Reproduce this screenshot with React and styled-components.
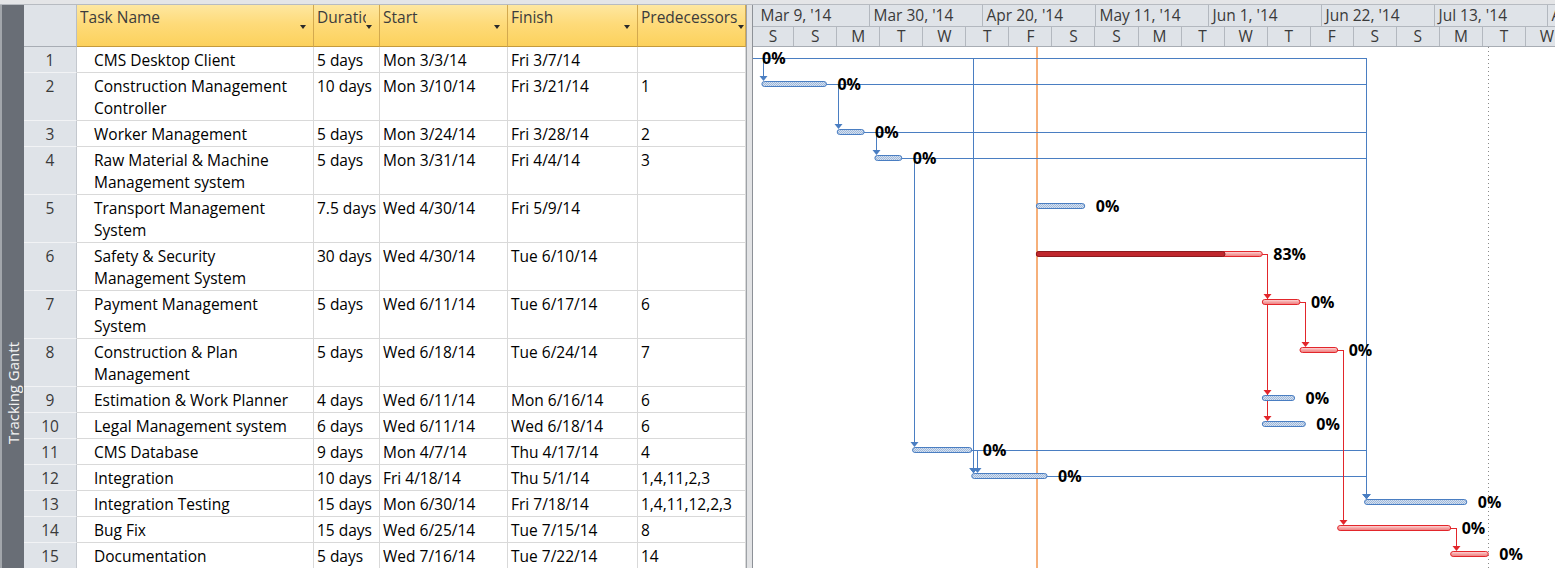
import React from 'react';
import styled, { createGlobalStyle } from 'styled-components';

const FONT = `"Open Sans", "Noto Sans", "DejaVu Sans", sans-serif`;

const GlobalStyle = createGlobalStyle`
  *, *::before, *::after { box-sizing: border-box; }
  html, body { margin: 0; padding: 0; background: #fff; overflow: hidden; }
  body { font-family: ${FONT}; }
`;

/* ---------- data ---------- */
const tasks = [
  { id: 1, name: ['CMS Desktop Client'], dur: '5 days', start: 'Mon 3/3/14', finish: 'Fri 3/7/14', pred: '', s: -6, e: -1 },
  { id: 2, name: ['Construction Management', 'Controller'], dur: '10 days', start: 'Mon 3/10/14', finish: 'Fri 3/21/14', pred: '1', s: 1, e: 13 },
  { id: 3, name: ['Worker Management'], dur: '5 days', start: 'Mon 3/24/14', finish: 'Fri 3/28/14', pred: '2', s: 15, e: 20 },
  { id: 4, name: ['Raw Material & Machine', 'Management system'], dur: '5 days', start: 'Mon 3/31/14', finish: 'Fri 4/4/14', pred: '3', s: 22, e: 27 },
  { id: 5, name: ['Transport Management', 'System'], dur: '7.5 days', start: 'Wed 4/30/14', finish: 'Fri 5/9/14', pred: '', s: 52, e: 61 },
  { id: 6, name: ['Safety & Security', 'Management System'], dur: '30 days', start: 'Wed 4/30/14', finish: 'Tue 6/10/14', pred: '', s: 52, e: 94, crit: true, prog: 0.835, label: '83%' },
  { id: 7, name: ['Payment Management', 'System'], dur: '5 days', start: 'Wed 6/11/14', finish: 'Tue 6/17/14', pred: '6', s: 94, e: 101, crit: true },
  { id: 8, name: ['Construction & Plan', 'Management'], dur: '5 days', start: 'Wed 6/18/14', finish: 'Tue 6/24/14', pred: '7', s: 101, e: 108, crit: true },
  { id: 9, name: ['Estimation & Work Planner'], dur: '4 days', start: 'Wed 6/11/14', finish: 'Mon 6/16/14', pred: '6', s: 94, e: 100 },
  { id: 10, name: ['Legal Management system'], dur: '6 days', start: 'Wed 6/11/14', finish: 'Wed 6/18/14', pred: '6', s: 94, e: 102 },
  { id: 11, name: ['CMS Database'], dur: '9 days', start: 'Mon 4/7/14', finish: 'Thu 4/17/14', pred: '4', s: 29, e: 40 },
  { id: 12, name: ['Integration'], dur: '10 days', start: 'Fri 4/18/14', finish: 'Thu 5/1/14', pred: '1,4,11,2,3', s: 40, e: 54 },
  { id: 13, name: ['Integration Testing'], dur: '15 days', start: 'Mon 6/30/14', finish: 'Fri 7/18/14', pred: '1,4,11,12,2,3', s: 113, e: 132 },
  { id: 14, name: ['Bug Fix'], dur: '15 days', start: 'Wed 6/25/14', finish: 'Tue 7/15/14', pred: '8', s: 108, e: 129, crit: true },
  { id: 15, name: ['Documentation'], dur: '5 days', start: 'Wed 7/16/14', finish: 'Tue 7/22/14', pred: '14', s: 129, e: 136, crit: true },
];

const links = [
  [1, 2], [2, 3], [3, 4], [4, 11],
  [1, 12], [2, 12], [3, 12], [4, 12], [11, 12],
  [1, 13], [2, 13], [3, 13], [4, 13], [11, 13], [12, 13],
  [6, 7], [6, 9], [6, 10], [7, 8], [8, 14], [14, 15],
];

const columns = [
  { key: 'name', label: 'Task Name' },
  { key: 'dur', label: 'Duration', clip: true },
  { key: 'start', label: 'Start' },
  { key: 'finish', label: 'Finish' },
  { key: 'pred', label: 'Predecessors' },
];

const topTier = ["Mar 9, '14", "Mar 30, '14", "Apr 20, '14", "May 11, '14", "Jun 1, '14", "Jun 22, '14", "Jul 13, '14", "A"];
const bottomTier = ['S', 'S', 'M', 'T', 'W', 'T', 'F', 'S', 'S', 'M', 'T', 'W', 'T', 'F', 'S', 'S', 'M', 'T', 'W'];

const DAY = 113 / 21;
const ORIGIN = 3.5;
const X = (d) => ORIGIN + d * DAY;

const rowHeights = tasks.map((t) => (t.name.length > 1 ? 48 : 26));
const rowTops = rowHeights.reduce((acc, h, i) => {
  acc.push(i === 0 ? 0 : acc[i - 1] + rowHeights[i - 1]);
  return acc;
}, []);
const byId = (id) => tasks[id - 1];
const barTop = (id) => rowTops[id - 1] + 8;
const barMid = (id) => Math.round(rowTops[id - 1] + 11) + 0.5;

/* ---------- layout ---------- */
const Screen = styled.div`
  width: 1555px;
  height: 568px;
  overflow: hidden;
  display: flex;
  flex-direction: column;
  background: #fff;
  font-family: ${FONT};
`;

const TopStrip = styled.div`
  flex: none;
  height: 5px;
  background: #e4e5e7;
  border-bottom: 1px solid #b7bbc1;
`;

const Main = styled.div`
  flex: 1;
  min-height: 0;
  display: flex;
`;

const ViewBar = styled.div`
  flex: none;
  width: 24px;
  background: #696e76;
  border-left: 2px solid #a2a6ab;
  display: flex;
  flex-direction: column;
  justify-content: flex-end;
  align-items: center;
  padding-bottom: 124px;
`;

const ViewLabel = styled.span`
  writing-mode: vertical-rl;
  transform: rotate(180deg);
  color: #f4f4f4;
  font-size: 15px;
  white-space: nowrap;
`;

const COLS = '53px 237px 66px 128px 130px 108px';

const Table = styled.div`
  flex: none;
  width: 722px;
  display: flex;
  flex-direction: column;
`;

const HeaderRow = styled.div`
  flex: none;
  display: grid;
  grid-template-columns: ${COLS};
  height: 42px;
`;

const HeaderCorner = styled.div`
  background: #dfe3e8;
  border-right: 1px solid #b9bec5;
  border-bottom: 1px solid #a8adb4;
`;

const HeaderCell = styled.div`
  display: flex;
  align-items: flex-start;
  padding: 1px 0 0 3px;
  background: linear-gradient(#fee7a0 0%, #fedb7a 45%, #fcd15c 100%);
  border-right: 1px solid #d3a94e;
  border-bottom: 1px solid #c49a3c;
  font-size: 15.5px;
  line-height: 22px;
  color: #3c3c3c;
  overflow: hidden;
`;

const HeaderLabel = styled.span`
  flex: ${(p) => (p.$clip ? '1' : 'none')};
  min-width: 0;
  overflow: hidden;
  white-space: nowrap;
`;

const Caret = styled.span`
  flex: none;
  width: 0;
  height: 0;
  margin: 19px 7px 0 auto;
  border-left: 3.5px solid transparent;
  border-right: 3.5px solid transparent;
  border-top: 4px solid #2a2a2a;
`;

const Row = styled.div`
  flex: none;
  display: grid;
  grid-template-columns: ${COLS};
  height: ${(p) => p.$h}px;
`;

const NumCell = styled.div`
  background: #dfe3e8;
  border-right: 1px solid #c4c8ce;
  border-bottom: 1px solid #f2f3f5;
  padding-top: 2px;
  text-align: center;
  font-size: 15.5px;
  line-height: 22px;
  color: #3a3a3a;
`;

const Cell = styled.div`
  border-right: 1px solid #d9d9d9;
  border-bottom: 1px solid #d9d9d9;
  padding: 2px 0 0 ${(p) => (p.$indent ? 17 : 3)}px;
  font-size: 15.5px;
  line-height: 22px;
  color: #000;
  white-space: nowrap;
  overflow: hidden;
`;

const Line = styled.div`
  white-space: nowrap;
`;

const Splitter = styled.div`
  flex: none;
  width: 7px;
  background: #e2e3e5;
  border-left: 1px solid #9ea2a7;
  border-right: 1px solid #8d9197;
`;

const Gantt = styled.div`
  flex: none;
  width: 802px;
  display: flex;
  flex-direction: column;
  overflow: hidden;
`;

const GanttHeader = styled.div`
  flex: none;
  height: 42px;
  background: #dfe3e8;
  border-bottom: 1px solid #a8adb4;
  display: flex;
  flex-direction: column;
`;

const Tier = styled.div`
  flex: none;
  display: flex;
  height: ${(p) => p.$h}px;
  padding-left: ${(p) => p.$pad}px;
  border-bottom: ${(p) => (p.$line ? '1px solid #b3b8bf' : 'none')};
  overflow: hidden;
`;

const TierCell = styled.div`
  flex: none;
  width: ${(p) => p.$w}px;
  border-right: 1px solid #b3b8bf;
  padding-left: ${(p) => (p.$center ? 0 : 4)}px;
  text-align: ${(p) => (p.$center ? 'center' : 'left')};
  font-size: 15.5px;
  line-height: ${(p) => p.$lh}px;
  color: #3a3a3a;
  white-space: nowrap;
  overflow: hidden;
`;

const Chart = styled.svg`
  display: block;
  flex: none;
`;

/* ---------- chart ---------- */
const BLUE = '#4a7ec2';
const RED = '#e2262b';
const STATUS = '#f6b07a';

function GanttChart() {
  const W = 802;
  const H = 521;
  const linkEls = links.map(([a, b], i) => {
    const p = byId(a);
    const s = byId(b);
    const vx = Math.round(Math.max(X(s.s) + 1, X(p.e) + 5)) + 0.5;
    const y1 = barMid(a);
    const tip = barTop(b);
    const color = p.crit ? RED : BLUE;
    return (
      <g key={i}>
        <path
          d={`M ${Math.round(X(p.e))} ${y1} H ${vx} V ${tip - 4}`}
          fill="none"
          stroke={color}
          strokeWidth="1"
          shapeRendering="crispEdges"
        />
        <polygon points={`${vx - 4},${tip - 5} ${vx + 4},${tip - 5} ${vx},${tip}`} fill={color} />
      </g>
    );
  });

  const bars = tasks.map((t) => {
    const x1 = X(t.s);
    const x2 = X(t.e);
    const y = barTop(t.id) + 0.5;
    const w = x2 - x1;
    return (
      <g key={t.id}>
        {t.crit ? (
          <>
            <rect x={x1} y={y} width={w} height={5} rx={2.5} fill="url(#redFill)" stroke={RED} strokeWidth="1" />
            {t.prog ? (
              <rect x={x1} y={y} width={w * t.prog} height={5} rx={2.5} fill="#c0272d" stroke="#8c1b1f" strokeWidth="1" />
            ) : null}
          </>
        ) : (
          <rect x={x1} y={y} width={w} height={5} rx={2.5} fill="url(#hatch)" stroke={BLUE} strokeWidth="1" />
        )}
        <text
          x={x2 + 11}
          y={barTop(t.id) + 9}
          fontFamily={FONT}
          fontWeight="700"
          fontSize="16"
          fill="#000"
        >
          {t.label || '0%'}
        </text>
      </g>
    );
  });

  return (
    <Chart width={W} height={H} viewBox={`0 0 ${W} ${H}`}>
      <defs>
        <pattern id="hatch" width="2" height="2" patternUnits="userSpaceOnUse">
          <rect width="2" height="2" fill="#d6e2f1" />
          <rect width="1" height="1" fill="#9fb8da" />
          <rect x="1" y="1" width="1" height="1" fill="#9fb8da" />
        </pattern>
        <linearGradient id="redFill" x1="0" y1="0" x2="0" y2="1">
          <stop offset="0" stopColor="#fde0e0" />
          <stop offset="0.5" stopColor="#f6a3a3" />
          <stop offset="1" stopColor="#ee7b7b" />
        </linearGradient>
      </defs>
      <rect x="283" y="0" width="2" height={H} fill={STATUS} />
      <line x1="735.5" y1="0" x2="735.5" y2={H} stroke="#8a8a8a" strokeWidth="1" strokeDasharray="1 3" shapeRendering="crispEdges" />
      {linkEls}
      {bars}
    </Chart>
  );
}

/* ---------- app ---------- */
export default function App() {
  const topCells = topTier.map((label, i) => (
    <TierCell key={i} $w={113} $lh={21}>
      {label}
    </TierCell>
  ));
  const firstBottom = X(7);
  const bottomCells = bottomTier.map((label, i) => (
    <TierCell key={i} $w={i === 0 ? firstBottom : 8 * DAY} $center $lh={19}>
      {label}
    </TierCell>
  ));

  return (
    <>
      <GlobalStyle />
      <Screen>
        <TopStrip />
        <Main>
          <ViewBar>
            <ViewLabel>Tracking Gantt</ViewLabel>
          </ViewBar>
          <Table>
            <HeaderRow>
              <HeaderCorner />
              {columns.map((c) => (
                <HeaderCell key={c.key}>
                  <HeaderLabel $clip={c.clip}>{c.label}</HeaderLabel>
                  <Caret />
                </HeaderCell>
              ))}
            </HeaderRow>
            {tasks.map((t, i) => (
              <Row key={t.id} $h={rowHeights[i]}>
                <NumCell>{t.id}</NumCell>
                <Cell $indent>
                  {t.name.map((l, j) => (
                    <Line key={j}>{l}</Line>
                  ))}
                </Cell>
                <Cell>{t.dur}</Cell>
                <Cell>{t.start}</Cell>
                <Cell>{t.finish}</Cell>
                <Cell>{t.pred}</Cell>
              </Row>
            ))}
          </Table>
          <Splitter />
          <Gantt>
            <GanttHeader>
              <Tier $h={22} $pad={ORIGIN} $line>
                {topCells}
              </Tier>
              <Tier $h={19} $pad={0}>
                {bottomCells}
              </Tier>
            </GanttHeader>
            <GanttChart />
          </Gantt>
        </Main>
      </Screen>
    </>
  );
}
